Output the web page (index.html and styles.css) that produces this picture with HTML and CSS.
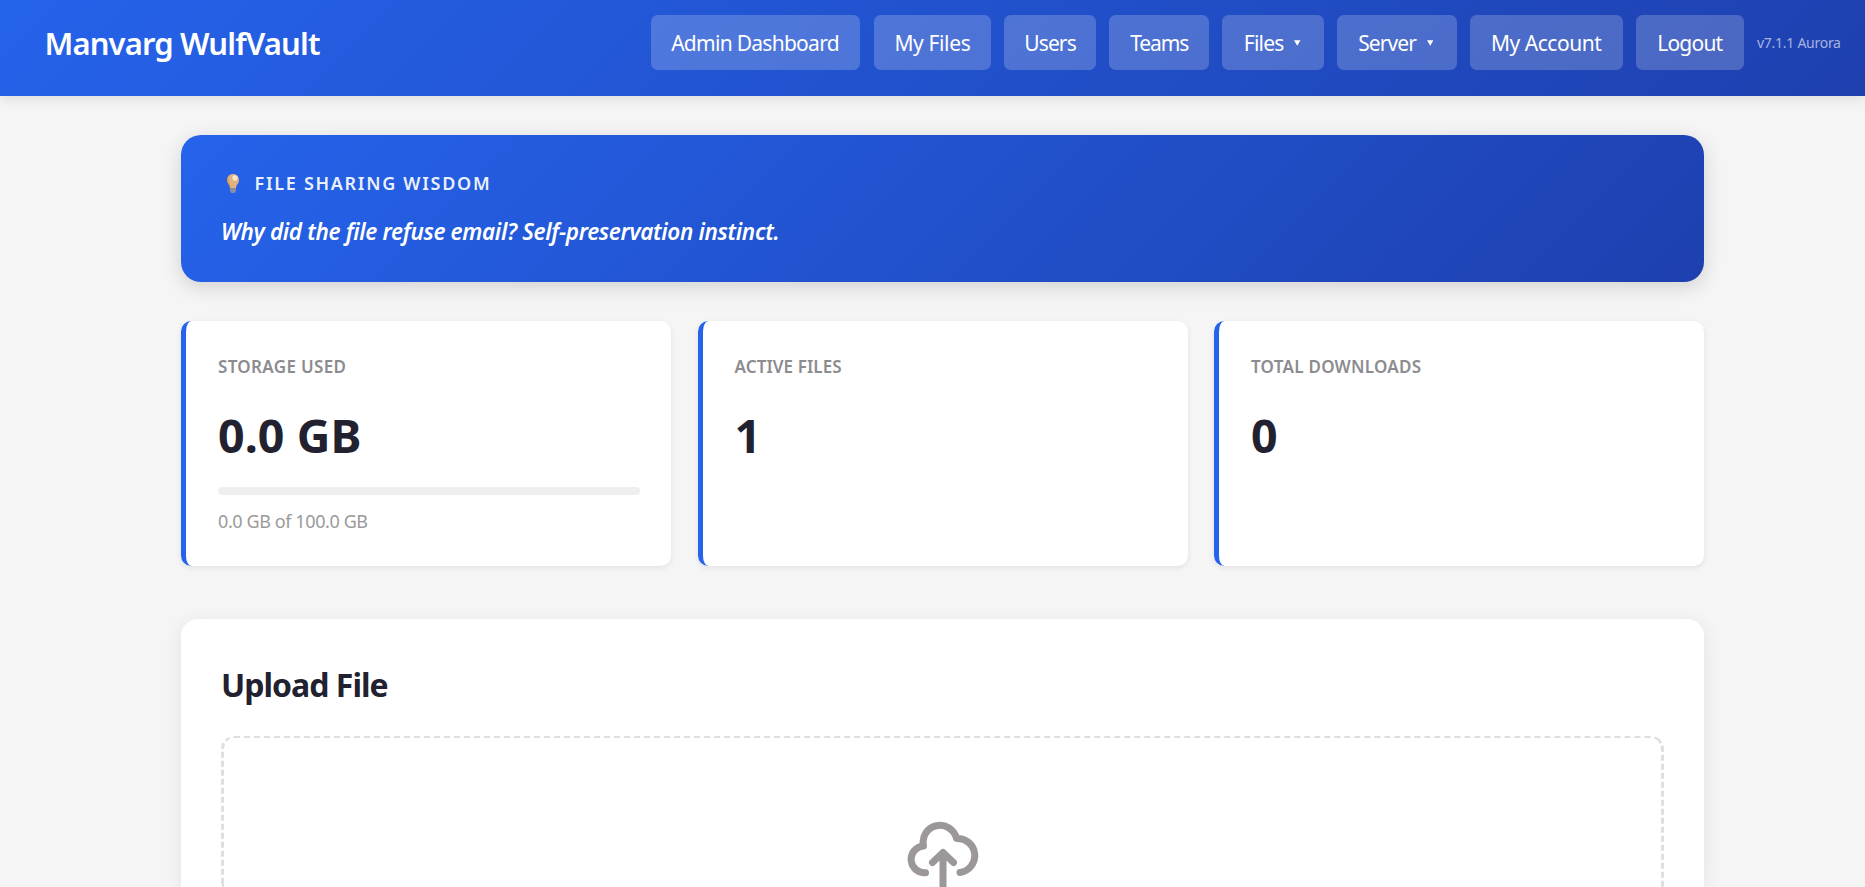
FILE: index.html
```html
<!DOCTYPE html>
<html lang="en">
<head>
<meta charset="utf-8">
<title>Manvarg WulfVault</title>
<link rel="stylesheet" href="styles.css">
</head>
<body>
<header class="topbar">
  <div class="brand">Manvarg WulfVault</div>
  <nav class="nav">
    <a class="nav-link nav-admin">Admin Dashboard</a>
    <a class="nav-link nav-myfiles">My Files</a>
    <a class="nav-link nav-users">Users</a>
    <a class="nav-link nav-teams">Teams</a>
    <a class="nav-link nav-files">Files<svg class="caret" viewBox="0 0 7 6"><path d="M0 0H7L3.5 6Z"/></svg></a>
    <a class="nav-link nav-server">Server<svg class="caret" viewBox="0 0 7 6"><path d="M0 0H7L3.5 6Z"/></svg></a>
    <a class="nav-link nav-account">My Account</a>
    <a class="nav-link nav-logout">Logout</a>
    <span class="version">v7.1.1 Aurora</span>
  </nav>
</header>
<main class="container">
  <section class="wisdom">
    <div class="wisdom-title">
      <svg class="bulb" viewBox="0 0 12 19"><path d="M6 0C2.4 0 0 2.7 0 6c0 2.6 1.6 4 2.5 5.6L3 14h6l.5-2.4C10.4 10 12 8.6 12 6 12 2.7 9.6 0 6 0Z" fill="#e0b183"/><path d="M1 3.5Q0 6 1.5 9L3.5 13.5" fill="none" stroke="#d9892f" stroke-width="1"/><ellipse cx="8" cy="4" rx="2.6" ry="2.8" fill="#fae6cb"/><path d="M3 14H9V17L7.5 19H4.5L3 17Z" fill="#8b8ca6"/></svg>
      <span>FILE SHARING WISDOM</span>
    </div>
    <div class="wisdom-text">Why did the file refuse email? Self-preservation instinct.</div>
  </section>
  <section class="stats">
    <div class="card">
      <div class="label label-storage">STORAGE USED</div>
      <div class="value">0.0 GB</div>
      <div class="bar"></div>
      <div class="sub">0.0 GB of 100.0 GB</div>
    </div>
    <div class="card">
      <div class="label label-active">ACTIVE FILES</div>
      <div class="value">1</div>
    </div>
    <div class="card">
      <div class="label label-downloads">TOTAL DOWNLOADS</div>
      <div class="value">0</div>
    </div>
  </section>
  <section class="upload">
    <h2 class="upload-title">Upload File</h2>
    <div class="dropzone">
      <svg class="cloud" viewBox="0 0 72 72"><path d="M18.5 54.7A13.3 13.3 0 0 1 16.500 28A16.9 16.9 0 1 1 49.500 20.5A17.1 17.1 0 0 1 53 54.5M36 72V34.5M25.5 44.5L36 34.5L46.5 44.5"/></svg>
    </div>
  </section>
</main>
</body>
</html>
```
FILE: styles.css
```css
* { box-sizing: border-box; }
body {
  margin: 0;
  height: 887px;
  overflow: hidden;
  background: #f5f5f5;
  font-family: "Noto Sans", "Open Sans", sans-serif;
  color: #222130;
}
.topbar {
  display: flex;
  justify-content: space-between;
  height: 96px;
  padding: 15px 24px 0 44.5px;
  background: linear-gradient(135deg, #2563eb 0%, #1e40af 100%);
  box-shadow: 0 3px 13px rgba(0, 0, 0, .1);
  color: #fff;
}
.brand { height: 57px; line-height: 57px; font-size: 31px; font-weight: 600; letter-spacing: -.87px; white-space: nowrap; }
.nav { display: flex; gap: 13.2px; align-items: center; height: 55px; white-space: nowrap; }
.nav-link {
  display: flex;
  align-items: center;
  justify-content: center;
  height: 55px;
  padding-top: 1px;
  border-radius: 6.6px;
  background: rgba(255, 255, 255, .2);
  font-size: 21px;
}
.nav-admin { width: 209px; margin-right: 1.2px; letter-spacing: -.72px; }
.nav-myfiles { width: 117px; letter-spacing: -.37px; }
.nav-users { width: 92px; letter-spacing: -.9px; }
.nav-teams { width: 100px; letter-spacing: -1.1px; }
.nav-files { width: 102px; letter-spacing: -.8px; }
.nav-server { width: 120px; margin: 0 -.4px 0 -.8px; letter-spacing: -.9px; }
.nav-account { width: 153px; letter-spacing: -.48px; }
.nav-logout { width: 108px; letter-spacing: -.8px; }
.caret { width: 6.5px; height: 6px; margin: 0 2.5px 1px 10.5px; fill: #fff; }
.version { width: 84px; font-size: 14px; letter-spacing: -.27px; color: rgba(255, 255, 255, .6); }
.container { width: 1523px; margin: 39px 0 0 181px; }
.wisdom {
  height: 147px;
  padding: 33px 40px;
  border-radius: 20px;
  background: linear-gradient(135deg, #2563eb 0%, #1e40af 100%);
  box-shadow: 0 5px 20px rgba(0, 0, 0, .15);
  color: #fff;
}
.wisdom-title { display: flex; align-items: center; height: 30px; font-size: 18px; font-weight: 600; letter-spacing: 1.7px; color: rgba(255, 255, 255, .93); }
.bulb { width: 12px; height: 19px; margin: 0 15.5px 0 6px; }
.wisdom-text { margin-top: 16px; height: 36px; line-height: 36px; font-size: 22.5px; font-weight: 600; font-style: italic; letter-spacing: -.34px; white-space: nowrap; }
.stats { display: grid; grid-template-columns: repeat(3, 1fr); gap: 26.5px; margin-top: 39px; }
.card {
  height: 245px;
  padding: 32px 31px 0 32px;
  border-left: 5px solid #2563eb;
  border-radius: 10.5px;
  background: #fff;
  box-shadow: 0 2px 6px rgba(0, 0, 0, .08);
}
.label { height: 28px; line-height: 28px; font-size: 17px; font-weight: 600; color: #8c8c8f; }
.label-storage { letter-spacing: .33px; }
.label-active { letter-spacing: .1px; }
.label-downloads { letter-spacing: .27px; }
.value { margin-top: 22px; height: 64px; line-height: 64px; font-size: 46.5px; font-weight: 700; letter-spacing: .1px; }
.bar { margin-top: 20px; height: 8px; border-radius: 4px; background: #efefef; }
.sub { margin-top: 12px; height: 28px; line-height: 28px; font-size: 18px; letter-spacing: -.4px; color: #9a9a9a; }
.upload {
  height: 268px;
  margin-top: 53px;
  padding: 41px 40px 0;
  border-radius: 17px 17px 0 0;
  background: #fff;
  box-shadow: 0 4px 20px rgba(0, 0, 0, .08);
}
.upload-title { margin: 0; height: 50px; line-height: 50px; font-size: 32px; font-weight: 700; letter-spacing: -.98px; }
.dropzone { display: flex; justify-content: center; margin-top: 26px; height: 151px; padding-top: 80px; border: dashed #dedede; border-width: 2px 3px 0; border-radius: 13px 13px 0 0; overflow: hidden; }
.cloud { flex: none; width: 72px; height: 72px; overflow: visible; fill: none; stroke: #9c9899; stroke-width: 7px; stroke-linecap: round; stroke-linejoin: round; }
```
